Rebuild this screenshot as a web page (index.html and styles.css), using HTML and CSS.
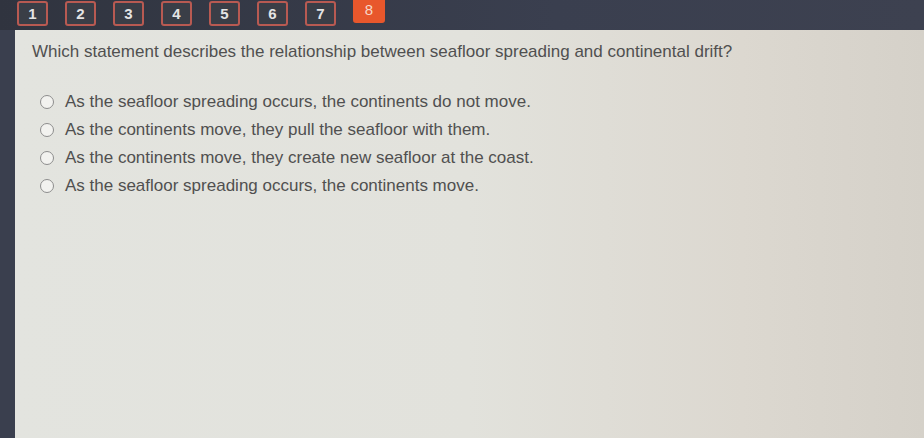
FILE: index.html
```html
<!DOCTYPE html>
<html>
<head>
<meta charset="utf-8">
<link rel="stylesheet" href="styles.css">
</head>
<body>
<div class="screen">
  <div class="topbar">
    <div class="qnum">1</div>
    <div class="qnum">2</div>
    <div class="qnum">3</div>
    <div class="qnum">4</div>
    <div class="qnum">5</div>
    <div class="qnum">6</div>
    <div class="qnum">7</div>
    <div class="qnum active">8</div>
  </div>
  <div class="main">
    <div class="leftstrip"></div>
    <div class="content">
      <p class="question">Which statement describes the relationship between seafloor spreading and continental drift?</p>
      <ul class="options">
        <li class="option"><span class="radio"></span><span>As the seafloor spreading occurs, the continents do not move.</span></li>
        <li class="option"><span class="radio"></span><span>As the continents move, they pull the seafloor with them.</span></li>
        <li class="option"><span class="radio"></span><span>As the continents move, they create new seafloor at the coast.</span></li>
        <li class="option"><span class="radio"></span><span>As the seafloor spreading occurs, the continents move.</span></li>
      </ul>
    </div>
  </div>
</div>
</body>
</html>
```
FILE: styles.css
```css
html, body {
  margin: 0;
  padding: 0;
}
body {
  width: 924px;
  height: 438px;
  overflow: hidden;
  background: #2f3441;
  font-family: "Liberation Sans", Arial, sans-serif;
}
.screen {
  display: flex;
  flex-direction: column;
  height: 438px;
}
.topbar {
  height: 30px;
  display: flex;
  align-items: flex-start;
  gap: 17px;
  padding-left: 17px;
  background: linear-gradient(90deg, #30343f 0%, #3a3f4f 60%, #3d4150 100%);
}
.qnum {
  width: 31px;
  height: 25px;
  margin-top: 1px;
  border: 2px solid #b85a52;
  border-radius: 3px;
  background: #3a3e47;
  color: #e4e4e4;
  font-size: 15px;
  font-weight: bold;
  display: flex;
  align-items: center;
  justify-content: center;
  box-sizing: border-box;
}
.qnum.active {
  background: #e8572c;
  border-color: #e8572c;
  color: #f6d7c8;
  margin-top: -4px;
  height: 27px;
  width: 32px;
  font-weight: normal;
}
.main {
  flex: 1;
  display: flex;
}
.leftstrip {
  width: 15px;
  background: #3a3f4e;
}
.content {
  flex: 1;
  background: linear-gradient(90deg, #e3e4df 0%, #e2e2dc 50%, #dcd8d0 80%, #d5d1c9 100%);
  padding: 12px 0 0 17px;
  color: #505050;
}
.question {
  margin: 0 0 30px 0;
  font-size: 17px;
  line-height: 20px;
}
.options {
  list-style: none;
  margin: 0;
  padding: 0 0 0 8px;
  display: flex;
  flex-direction: column;
  gap: 8px;
}
.option {
  display: flex;
  align-items: center;
  gap: 11px;
  font-size: 17px;
  line-height: 20px;
}
.radio {
  width: 14px;
  height: 14px;
  border: 1.5px solid #8d8d8d;
  border-radius: 50%;
  background: #f2f2ef;
  box-sizing: border-box;
}
```
